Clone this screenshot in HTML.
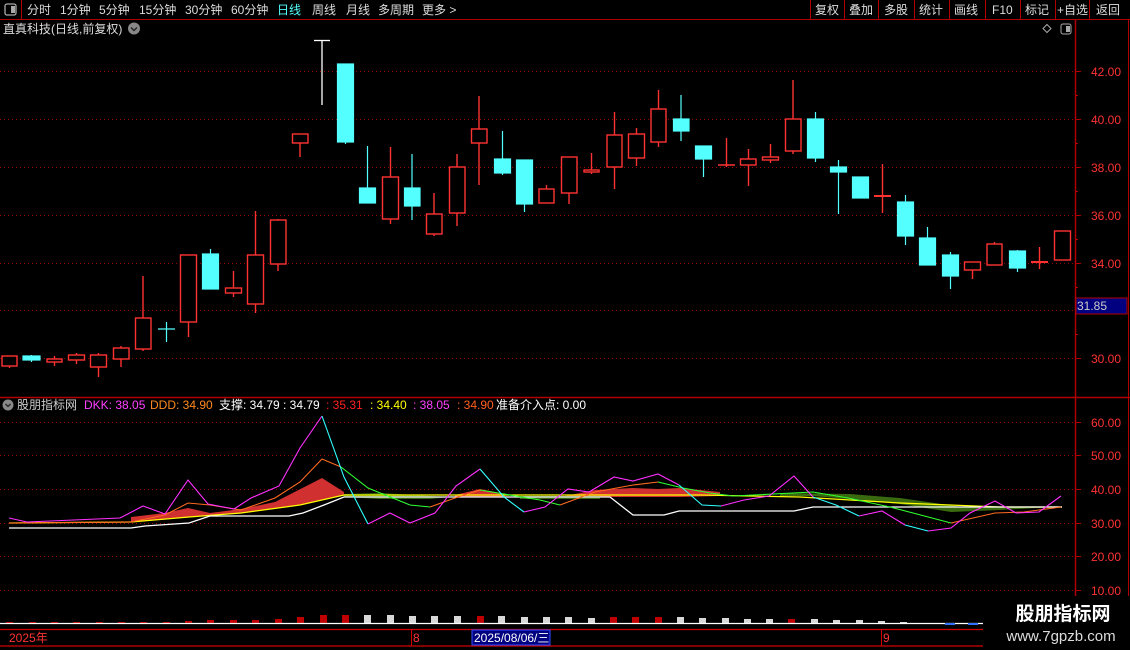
<!DOCTYPE html>
<html><head><meta charset="utf-8"><style>
html,body{margin:0;padding:0;background:#000;width:1130px;height:650px;overflow:hidden}
svg{display:block}
text{font-family:"Liberation Sans","Noto Sans CJK SC",sans-serif;font-size:12px}
</style></head><body>
<svg width="1130" height="650" viewBox="0 0 1130 650" xmlns="http://www.w3.org/2000/svg">
<rect width="1130" height="650" fill="#000"/>
<!-- top bar -->
<line x1="0" y1="19.5" x2="1130" y2="19.5" stroke="#b00000"/>
<line x1="21.5" y1="0" x2="21.5" y2="19" stroke="#b00000"/>
<rect x="5" y="4" width="11" height="11" rx="2" fill="none" stroke="#aaa" stroke-width="1.3"/>
<rect x="11" y="6" width="4" height="7" fill="#aaa"/>
<g fill="#ddd">
<text x="27" y="14">分时</text><text x="60" y="14">1分钟</text><text x="99" y="14">5分钟</text><text x="139" y="14">15分钟</text><text x="185" y="14">30分钟</text><text x="231" y="14">60分钟</text>
<text x="277" y="14" fill="#54ffff">日线</text><text x="312" y="14">周线</text><text x="346" y="14">月线</text><text x="378" y="14">多周期</text><text x="422" y="14">更多 &gt;</text>
</g>
<g stroke="#b00000"><line x1="810.5" y1="0" x2="810.5" y2="19"/><line x1="844.5" y1="0" x2="844.5" y2="19"/><line x1="878.5" y1="0" x2="878.5" y2="19"/><line x1="914.5" y1="0" x2="914.5" y2="19"/><line x1="949.5" y1="0" x2="949.5" y2="19"/><line x1="985.5" y1="0" x2="985.5" y2="19"/><line x1="1020.5" y1="0" x2="1020.5" y2="19"/><line x1="1055.5" y1="0" x2="1055.5" y2="19"/><line x1="1089.5" y1="0" x2="1089.5" y2="19"/></g>
<g fill="#ddd"><text x="815" y="14">复权</text><text x="849" y="14">叠加</text><text x="884" y="14">多股</text><text x="919" y="14">统计</text><text x="954" y="14">画线</text><text x="992" y="14">F10</text><text x="1025" y="14">标记</text><text x="1057" y="14">+自选</text><text x="1096" y="14">返回</text></g>
<!-- title -->
<text x="3" y="33" fill="#ddd">直真科技(日线,前复权)</text>
<circle cx="134" cy="28.5" r="6" fill="#888"/><path d="M131 27.5l3 3 3-3" stroke="#222" stroke-width="1.4" fill="none"/>
<path d="M1047 24.5l4 4-4 4-4-4z" fill="none" stroke="#aaa"/>
<rect x="1061" y="24" width="10" height="10" rx="2" fill="none" stroke="#aaa"/><rect x="1066" y="26" width="4" height="6" fill="#aaa"/>
<!-- axes -->
<line x1="1075.5" y1="20" x2="1075.5" y2="628" stroke="#b00000" stroke-width="1.5"/>
<line x1="1128.5" y1="20" x2="1128.5" y2="628" stroke="#b00000"/>
<line x1="0" y1="397.5" x2="1130" y2="397.5" stroke="#b00000" stroke-width="1.5"/>
<!-- main grid -->
<g stroke="#900" stroke-dasharray="1,3">
<line x1="0" y1="71.5" x2="1075" y2="71.5"/><line x1="0" y1="119.5" x2="1075" y2="119.5"/><line x1="0" y1="167.5" x2="1075" y2="167.5"/><line x1="0" y1="215.5" x2="1075" y2="215.5"/><line x1="0" y1="263.5" x2="1075" y2="263.5"/><line x1="0" y1="310.5" x2="1075" y2="310.5"/><line x1="0" y1="358.5" x2="1075" y2="358.5"/>
</g>
<g stroke="#b00000"><line x1="1075" y1="71.5" x2="1081" y2="71.5"/><line x1="1075" y1="119.5" x2="1081" y2="119.5"/><line x1="1075" y1="167.5" x2="1081" y2="167.5"/><line x1="1075" y1="215.5" x2="1081" y2="215.5"/><line x1="1075" y1="263.5" x2="1081" y2="263.5"/><line x1="1075" y1="358.5" x2="1081" y2="358.5"/>
<line x1="1075" y1="95.5" x2="1078" y2="95.5"/><line x1="1075" y1="143.5" x2="1078" y2="143.5"/><line x1="1075" y1="191.5" x2="1078" y2="191.5"/><line x1="1075" y1="239.5" x2="1078" y2="239.5"/><line x1="1075" y1="287.5" x2="1078" y2="287.5"/><line x1="1075" y1="334.5" x2="1078" y2="334.5"/></g>
<g fill="#ff3232" text-anchor="end"><text x="1121" y="76">42.00</text><text x="1121" y="124">40.00</text><text x="1121" y="172">38.00</text><text x="1121" y="220">36.00</text><text x="1121" y="268">34.00</text><text x="1121" y="363">30.00</text></g>
<rect x="1076" y="298" width="51" height="16" fill="#000080" stroke="#b00000"/>
<text x="1077" y="310" fill="#ccc">31.85</text>
<!-- candles -->
<g stroke="#ff3232" stroke-width="1.4" fill="#000">
<line x1="9.5" y1="356" x2="9.5" y2="368"/><rect x="2" y="356" width="15" height="10"/>
<line x1="54.5" y1="356" x2="54.5" y2="366"/><rect x="47" y="359" width="15" height="3"/>
<line x1="76.5" y1="353" x2="76.5" y2="364"/><rect x="68.5" y="355" width="16" height="5"/>
<line x1="98.5" y1="353" x2="98.5" y2="377"/><rect x="90.5" y="355" width="16" height="12"/>
<line x1="121" y1="346" x2="121" y2="367"/><rect x="113.5" y="348" width="15.5" height="11"/>
<line x1="143" y1="276" x2="143" y2="351"/><rect x="135.5" y="318" width="15.5" height="31"/>
<line x1="188.5" y1="255" x2="188.5" y2="337"/><rect x="180.5" y="255" width="16" height="67"/>
<line x1="233.5" y1="271" x2="233.5" y2="297"/><rect x="225.5" y="288" width="16" height="5"/>
<line x1="255.5" y1="211" x2="255.5" y2="313"/><rect x="247.5" y="255" width="16" height="49"/>
<line x1="278" y1="219" x2="278" y2="271"/><rect x="270.5" y="220" width="15.5" height="44"/>
<line x1="300" y1="134" x2="300" y2="157"/><rect x="292.5" y="134" width="15.5" height="9"/>
<line x1="390.5" y1="147" x2="390.5" y2="224"/><rect x="382.5" y="177" width="16" height="42"/>
<line x1="434" y1="193" x2="434" y2="236"/><rect x="426.5" y="214" width="15.5" height="20"/>
<line x1="457" y1="154" x2="457" y2="226"/><rect x="449.5" y="167" width="15.5" height="46"/>
<line x1="479" y1="96" x2="479" y2="185"/><rect x="471.5" y="129" width="15.5" height="14"/>
<line x1="546.5" y1="185" x2="546.5" y2="203"/><rect x="539" y="189" width="15" height="14"/>
<line x1="569" y1="157" x2="569" y2="204"/><rect x="561.5" y="157" width="15.5" height="36"/>
<line x1="591.5" y1="153" x2="591.5" y2="174"/><rect x="584" y="170" width="15" height="2"/>
<line x1="614.5" y1="112" x2="614.5" y2="189"/><rect x="607" y="135" width="15" height="32"/>
<line x1="636.5" y1="128" x2="636.5" y2="166"/><rect x="628.5" y="134" width="16" height="24"/>
<line x1="658.5" y1="90" x2="658.5" y2="147"/><rect x="651" y="109" width="15" height="33"/>
<line x1="726.5" y1="138" x2="726.5" y2="167"/><line x1="718" y1="165" x2="735" y2="165"/>
<line x1="748.5" y1="149" x2="748.5" y2="186"/><rect x="740.5" y="159" width="15.5" height="6"/>
<line x1="770.5" y1="144" x2="770.5" y2="163"/><rect x="762.5" y="157" width="16" height="3"/>
<line x1="793" y1="80" x2="793" y2="154"/><rect x="785.5" y="119" width="15.5" height="32"/>
<line x1="882.5" y1="164" x2="882.5" y2="213"/><line x1="874" y1="196" x2="891" y2="196" stroke-width="2"/>
<line x1="972.5" y1="262" x2="972.5" y2="279"/><rect x="964.5" y="262" width="16" height="8"/>
<line x1="994.5" y1="242" x2="994.5" y2="265"/><rect x="987" y="244" width="15" height="21"/>
<line x1="1039.5" y1="247" x2="1039.5" y2="269"/><line x1="1031" y1="262" x2="1048" y2="262" stroke-width="2"/>
<rect x="1054.5" y="231" width="16" height="29"/>
</g>
<g fill="#54ffff" stroke="#54ffff" stroke-width="1.2">
<rect x="23" y="356" width="17" height="4"/><line x1="31.5" y1="355" x2="31.5" y2="362"/>
<line x1="158" y1="329" x2="175" y2="329"/><line x1="166.5" y1="322" x2="166.5" y2="342"/>
<line x1="210.5" y1="249" x2="210.5" y2="289"/><rect x="202.5" y="254" width="16" height="35"/>
<line x1="345.5" y1="64" x2="345.5" y2="144"/><rect x="337.5" y="64" width="16" height="78"/>
<line x1="367.5" y1="146" x2="367.5" y2="203"/><rect x="359.5" y="188" width="16" height="15"/>
<line x1="412" y1="154" x2="412" y2="220"/><rect x="404.5" y="188" width="15.5" height="18"/>
<line x1="502.5" y1="131" x2="502.5" y2="175"/><rect x="494.5" y="159" width="16" height="14"/>
<line x1="524.5" y1="160" x2="524.5" y2="212"/><rect x="516.5" y="160" width="16" height="44"/>
<line x1="681" y1="95" x2="681" y2="141"/><rect x="673.5" y="119" width="15.5" height="12"/>
<line x1="703.5" y1="146" x2="703.5" y2="177"/><rect x="695.5" y="146" width="16" height="13"/>
<line x1="815.5" y1="112" x2="815.5" y2="162"/><rect x="807.5" y="119" width="16" height="39"/>
<line x1="838.5" y1="160" x2="838.5" y2="214"/><rect x="830.5" y="167" width="16" height="5"/>
<rect x="852.5" y="177" width="16" height="21"/>
<line x1="905.5" y1="195" x2="905.5" y2="245"/><rect x="897.5" y="202" width="16" height="34"/>
<line x1="927.5" y1="227" x2="927.5" y2="265"/><rect x="919.5" y="238" width="16" height="27"/>
<line x1="950.5" y1="252" x2="950.5" y2="289"/><rect x="942.5" y="255" width="16" height="21"/>
<line x1="1017.5" y1="250" x2="1017.5" y2="272"/><rect x="1009.5" y="251" width="16" height="17"/>
</g>
<g stroke="#fff" stroke-width="1.3"><line x1="322" y1="40" x2="322" y2="105"/><line x1="314" y1="40.5" x2="330" y2="40.5"/></g>
<!-- indicator legend -->
<circle cx="8" cy="405" r="5.5" fill="#888"/><path d="M5.5 404l2.5 2.5 2.5-2.5" stroke="#222" stroke-width="1.3" fill="none"/>
<text y="409"><tspan x="17" fill="#ccc">股朋指标网</tspan><tspan x="84" fill="#ff40ff">DKK: 38.05</tspan><tspan x="150" fill="#ff8a20">DDD: 34.90</tspan><tspan x="219" fill="#fff">支撑: 34.79</tspan><tspan x="283" fill="#fff">: 34.79</tspan><tspan x="326" fill="#ff2020">: 35.31</tspan><tspan x="370" fill="#ffff00">: 34.40</tspan><tspan x="413" fill="#ff40ff">: 38.05</tspan><tspan x="457" fill="#ff6020">: 34.90</tspan><tspan x="496" fill="#fff">准备介入点: 0.00</tspan></text>
<!-- indicator grid -->
<g stroke="#900" stroke-dasharray="1,3">
<line x1="0" y1="422.5" x2="1075" y2="422.5"/><line x1="0" y1="455.5" x2="1075" y2="455.5"/><line x1="0" y1="489.5" x2="1075" y2="489.5"/><line x1="0" y1="523.5" x2="1075" y2="523.5"/><line x1="0" y1="556.5" x2="1075" y2="556.5"/><line x1="0" y1="590.5" x2="1075" y2="590.5"/>
</g>
<g stroke="#b00000"><line x1="1075" y1="422.5" x2="1081" y2="422.5"/><line x1="1075" y1="455.5" x2="1081" y2="455.5"/><line x1="1075" y1="489.5" x2="1081" y2="489.5"/><line x1="1075" y1="523.5" x2="1081" y2="523.5"/><line x1="1075" y1="556.5" x2="1081" y2="556.5"/><line x1="1075" y1="590.5" x2="1081" y2="590.5"/></g>
<g fill="#ff3232" text-anchor="end"><text x="1121" y="427">60.00</text><text x="1121" y="460">50.00</text><text x="1121" y="494">40.00</text><text x="1121" y="528">30.00</text><text x="1121" y="561">20.00</text><text x="1121" y="595">10.00</text></g>
<!-- bands -->
<polygon fill="#d03030" points="131,517 165,513 188,508 210,513 241,509 275,502 322,478 344,492 344,495 300,505 241,513 189,517 131,522"/>
<polygon fill="#d03030" points="560,497 595,490 633,488 658,489 680,488 720,492 720,496 680,497 600,497 560,497"/>
<polygon fill="#d03030" points="455,495 480,489 505,494 505,497 455,497"/>
<polygon fill="#3a6a10" points="344,494 380,493 430,496 450,497 430,499 380,499 344,497"/>
<polygon fill="#3a6a10" points="780,493 850,494 900,498 962,507 1054,507 1000,510 951,512 900,504 860,500 813,496 780,496"/>
<polygon fill="#3a6a10" points="520,496 600,496 600,499 520,499"/>
<!-- lines -->
<polyline fill="none" stroke="#ffff00" stroke-width="1.3" points="9,523 131,522 189,517 241,513 300,505 344,495 700,495 800,497 900,503 1000,507 1062,507"/>
<polyline fill="none" stroke="#fff" stroke-width="1.3" points="9,528 131,528 145,526 189,523 210,516 289,516 303,513 324,505 344,497 610,497 633,515 664,515 679,511 794,511 813,507 1062,507"/>
<polyline fill="none" stroke="#ff6a20" stroke-width="1.1" points="9,523 131,522 165,515 188,503 210,505 241,510 275,498 300,482 322,459 341,467"/>
<polyline fill="none" stroke="#30ff30" stroke-width="1.1" points="341,467 368,488 410,505 430,507"/>
<polyline fill="none" stroke="#ff6a20" stroke-width="1.1" points="430,507 455,498 480,490"/>
<polyline fill="none" stroke="#30ff30" stroke-width="1.1" points="480,490 540,500 560,505"/>
<polyline fill="none" stroke="#ff6a20" stroke-width="1.1" points="560,505 595,492 633,485 658,482"/>
<polyline fill="none" stroke="#30ff30" stroke-width="1.1" points="658,482 683,488 710,493 733,496 813,492 848,498 890,507 913,513 951,523"/>
<polyline fill="none" stroke="#ff6a20" stroke-width="1.1" points="951,523 995,513 1024,512 1061,507"/>
<polyline fill="none" stroke="#ff30ff" stroke-width="1.1" points="9,518 27,522 120,518 143,506 165,514 188,480 208,504 234,509 251,498 279,486 300,448 322,416"/>
<polyline fill="none" stroke="#30ffff" stroke-width="1.1" points="322,416 344,477 368,524"/>
<polyline fill="none" stroke="#ff30ff" stroke-width="1.1" points="368,524 390,513 410,523 435,513 456,486 480,469"/>
<polyline fill="none" stroke="#30ffff" stroke-width="1.1" points="480,469 504,497 524,512"/>
<polyline fill="none" stroke="#ff30ff" stroke-width="1.1" points="524,512 545,507 568,489 589,492 614,477 633,481 658,474 679,485"/>
<polyline fill="none" stroke="#30ffff" stroke-width="1.1" points="679,485 702,505 721,506"/>
<polyline fill="none" stroke="#ff30ff" stroke-width="1.1" points="721,506 744,500 769,496 794,476 813,497"/>
<polyline fill="none" stroke="#30ffff" stroke-width="1.1" points="813,497 836,505 859,516"/>
<polyline fill="none" stroke="#ff30ff" stroke-width="1.1" points="859,516 882,511 905,525"/>
<polyline fill="none" stroke="#30ffff" stroke-width="1.1" points="905,525 928,531"/>
<polyline fill="none" stroke="#ff30ff" stroke-width="1.1" points="928,531 951,528 970,513 995,501 1016,513 1039,512 1061,496"/>
<!-- volume bars -->
<g fill="#c00000">
<rect x="6" y="622" width="7" height="1"/><rect x="29" y="622" width="7" height="1"/><rect x="51" y="622" width="7" height="1"/><rect x="73" y="622" width="7" height="1"/><rect x="96" y="622" width="7" height="1"/><rect x="118" y="622" width="7" height="1"/><rect x="140" y="622" width="7" height="1"/><rect x="163" y="622" width="7" height="1"/><rect x="185" y="621" width="7" height="2"/><rect x="207" y="620" width="7" height="3"/><rect x="230" y="620" width="7" height="3"/><rect x="252" y="620" width="7" height="3"/><rect x="275" y="619" width="7" height="4"/><rect x="297" y="617" width="7" height="6"/><rect x="320" y="615" width="7" height="8"/><rect x="342" y="615" width="7" height="8"/>
<rect x="477" y="616" width="7" height="7"/><rect x="610" y="617" width="7" height="6"/><rect x="632" y="617" width="7" height="6"/><rect x="655" y="617" width="7" height="6"/><rect x="788" y="619" width="7" height="4"/>
</g>
<g fill="#d8d8d8">
<rect x="364" y="615" width="7" height="8"/><rect x="387" y="615" width="7" height="8"/><rect x="409" y="616" width="7" height="7"/><rect x="431" y="616" width="7" height="7"/><rect x="454" y="616" width="7" height="7"/>
<rect x="498" y="616" width="7" height="7"/><rect x="521" y="617" width="7" height="6"/><rect x="543" y="617" width="7" height="6"/><rect x="565" y="617" width="7" height="6"/><rect x="588" y="618" width="7" height="5"/>
<rect x="677" y="617" width="7" height="6"/><rect x="699" y="618" width="7" height="5"/><rect x="722" y="618" width="7" height="5"/><rect x="744" y="619" width="7" height="4"/><rect x="766" y="619" width="7" height="4"/>
<rect x="811" y="619" width="7" height="4"/><rect x="833" y="620" width="7" height="3"/><rect x="856" y="620" width="7" height="3"/><rect x="878" y="621" width="7" height="2"/><rect x="900" y="622" width="7" height="1"/>
</g>
<line x1="0" y1="623.5" x2="983" y2="623.5" stroke="#fff" stroke-width="1.3"/>
<rect x="945" y="623" width="10" height="2" fill="#3070ff"/><rect x="968" y="623" width="10" height="2" fill="#3070ff"/>
<!-- date axis -->
<line x1="0" y1="629.5" x2="983" y2="629.5" stroke="#d00000" stroke-width="1.3"/>
<line x1="0" y1="646" x2="983" y2="646" stroke="#d00000" stroke-width="1.3"/>
<line x1="411.5" y1="629" x2="411.5" y2="646" stroke="#d00000"/>
<line x1="881.5" y1="629" x2="881.5" y2="646" stroke="#d00000"/>
<text x="9" y="642" fill="#ff3232">2025年</text>
<text x="413" y="642" fill="#ff3232">8</text>
<text x="883" y="642" fill="#ff3232">9</text>
<rect x="472" y="630" width="78" height="15" fill="#000080" stroke="#3050ff"/>
<text x="474" y="642" fill="#fff">2025/08/06/三</text>
<!-- watermark -->
<rect x="984" y="596" width="146" height="54" fill="#000"/>
<text x="1063" y="620" fill="#fff" text-anchor="middle" style="font-size:19px;font-weight:bold">股朋指标网</text>
<text x="1061" y="641" fill="#ddd" text-anchor="middle" style="font-size:15px">www.7gpzb.com</text>
</svg>
</body></html>
